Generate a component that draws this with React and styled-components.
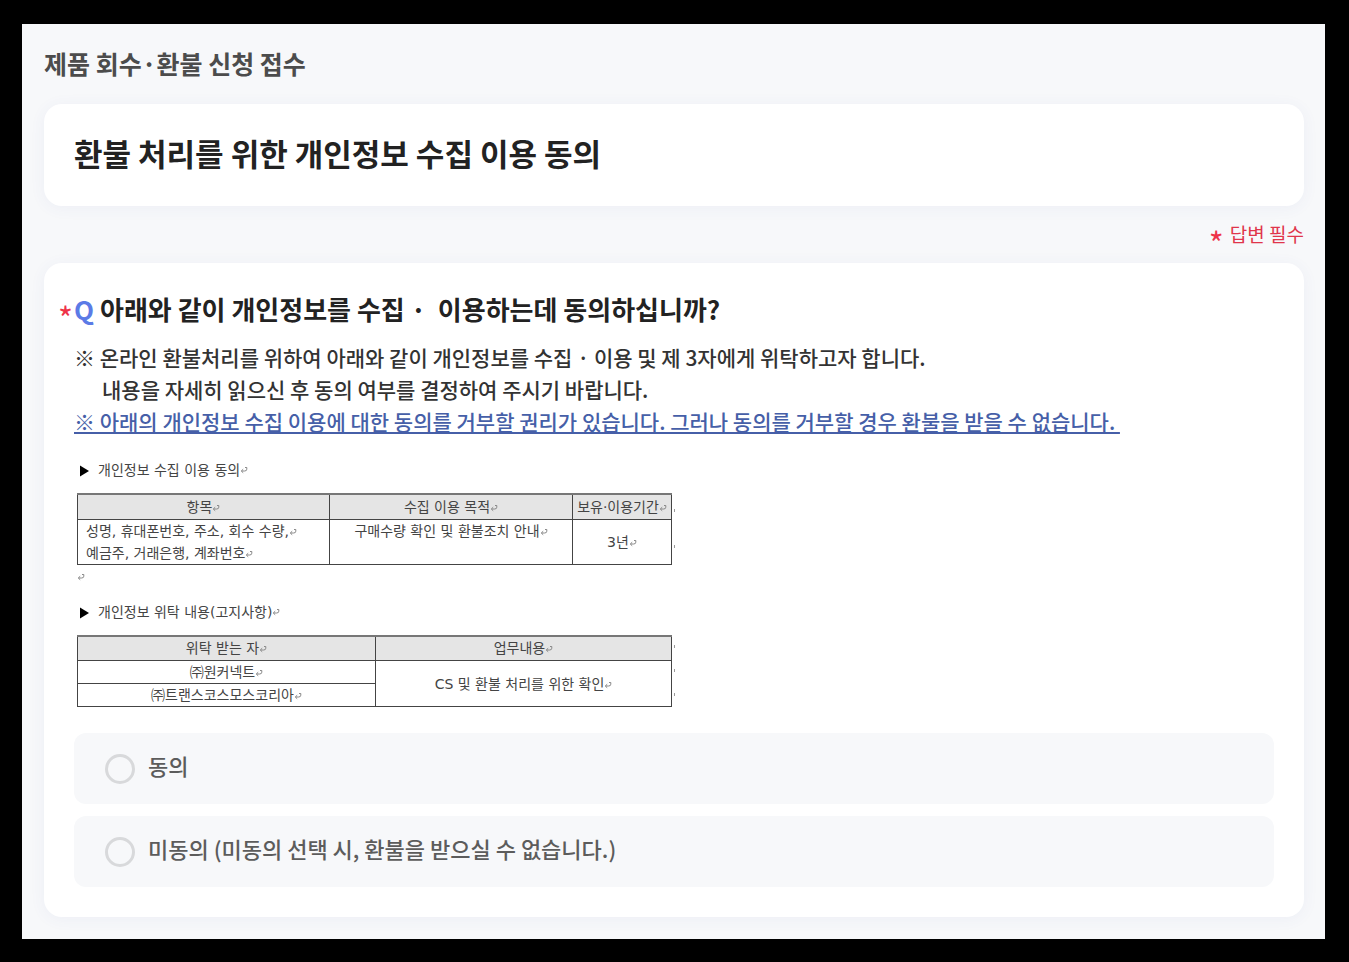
import React, { useState } from "react";
import styled, { createGlobalStyle } from "styled-components";

const options = [
  { value: "agree", label: "동의" },
  { value: "disagree", label: "미동의 (미동의 선택 시, 환불을 받으실 수 없습니다.)" },
];

function Mark() {
  return (
    <ReturnMark viewBox="0 0 8 8" aria-hidden="true">
      <path d="M5 1.5H6.8V3.2Q6.8 5 4.6 5H1.4M3.2 3.2L1.3 5L3.2 6.8" />
    </ReturnMark>
  );
}

function App() {
  const [answer, setAnswer] = useState("");
  return (
    <>
      <GlobalStyle />
      <Page>
        <FormName>제품 회수·환불 신청 접수</FormName>
        <TitleCard>
          <h1>환불 처리를 위한 개인정보 수집 이용 동의</h1>
        </TitleCard>
        <Required>
          <Star>*</Star>
          <span>답변 필수</span>
        </Required>
        <QuestionCard>
          <Question id="question">
            <Star>*</Star>
            <span className="q">Q</span>
            <span>아래와 같이 개인정보를 수집 ·&nbsp; 이용하는데 동의하십니까?</span>
          </Question>
          <Description>
            <p>※ 온라인 환불처리를 위하여 아래와 같이 개인정보를 수집 · 이용 및 제 3자에게 위탁하고자 합니다.</p>
            <p className="indent">내용을 자세히 읽으신 후 동의 여부를 결정하여 주시기 바랍니다.</p>
            <p className="notice">
              ※ 아래의 개인정보 수집 이용에 대한 동의를 거부할 권리가 있습니다. 그러나 동의를 거부할 경우 환불을 받을 수 없습니다.&nbsp;
            </p>
          </Description>

          <Document>
            <DocHeading>
              <Arrow viewBox="0 0 10 12" aria-hidden="true"><path d="M0 0.5L9 6L0 11.5Z" /></Arrow>
              개인정보 수집 이용 동의<Mark />
            </DocHeading>
            <TableRow>
              <Table>
                <colgroup>
                  <col width="252" />
                  <col width="243" />
                  <col width="99" />
                </colgroup>
                <thead>
                  <tr>
                    <th>항목<Mark /></th>
                    <th>수집 이용 목적<Mark /></th>
                    <th>보유·이용기간<Mark /></th>
                  </tr>
                </thead>
                <tbody>
                  <tr>
                    <Cell $left>
                      성명, 휴대폰번호, 주소, 회수 수량,<Mark /><br />
                      예금주, 거래은행, 계좌번호<Mark />
                    </Cell>
                    <Cell $top>구매수량 확인 및 환불조치 안내<Mark /></Cell>
                    <Cell>3년<Mark /></Cell>
                  </tr>
                </tbody>
              </Table>
              <Ticks><i /><i /></Ticks>
            </TableRow>
            <EmptyLine><Mark /></EmptyLine>

            <DocHeading>
              <Arrow viewBox="0 0 10 12" aria-hidden="true"><path d="M0 0.5L9 6L0 11.5Z" /></Arrow>
              개인정보 위탁 내용(고지사항)<Mark />
            </DocHeading>
            <TableRow>
              <Table>
                <colgroup>
                  <col width="298" />
                  <col width="296" />
                </colgroup>
                <thead>
                  <tr>
                    <th>위탁 받는 자<Mark /></th>
                    <th>업무내용<Mark /></th>
                  </tr>
                </thead>
                <tbody>
                  <tr>
                    <Cell>㈜원커넥트<Mark /></Cell>
                    <Cell rowSpan="2">CS 및 환불 처리를 위한 확인<Mark /></Cell>
                  </tr>
                  <tr>
                    <Cell>㈜트랜스코스모스코리아<Mark /></Cell>
                  </tr>
                </tbody>
              </Table>
              <Ticks><i /><i /><i /></Ticks>
            </TableRow>
          </Document>

          <Options role="radiogroup" aria-labelledby="question">
            {options.map((o) => (
              <Option key={o.value} htmlFor={o.value}>
                <input
                  type="radio"
                  id={o.value}
                  name="consent"
                  value={o.value}
                  checked={answer === o.value}
                  onChange={() => setAnswer(o.value)}
                />
                <span>{o.label}</span>
              </Option>
            ))}
          </Options>
        </QuestionCard>
      </Page>
    </>
  );
}

export default App;

const GlobalStyle = createGlobalStyle`
  * {
    box-sizing: border-box;
  }
  body {
    margin: 0;
    padding: 24px 24px 23px 22px;
    background: #000;
    font-family: "Noto Sans CJK KR", sans-serif;
  }
  h1, h2, h3, p {
    margin: 0;
  }
`;

const Page = styled.main`
  padding: 21px 21px 22px 22px;
  background: #f7f8fa;
`;

const FormName = styled.h2`
  font-size: 25px;
  line-height: 36px;
  font-weight: 700;
  color: #4c4c4c;
`;

const Card = styled.section`
  background: #fff;
  border-radius: 18px;
  box-shadow: 0 2px 16px rgba(70, 90, 170, 0.06);
`;

const TitleCard = styled(Card)`
  margin-top: 23px;
  padding: 27px 30px 31px;

  h1 {
    font-size: 31px;
    line-height: 44px;
    font-weight: 700;
    color: #222;
  }
`;

const Required = styled.div`
  display: flex;
  justify-content: flex-end;
  gap: 6px;
  padding: 14px 0 15px;
  font-size: 19px;
  line-height: 28px;
  color: #e0354b;
`;

const Star = styled.span`
  height: 28px;
  padding-top: 8px;
  font-size: 32px;
  line-height: 28px;
  font-weight: 400;
  color: #ee3348;
`;

const QuestionCard = styled(Card)`
  padding: 27px 30px 30px;
`;

const Question = styled.h3`
  display: flex;
  align-items: center;
  font-size: 26px;
  line-height: 38px;
  font-weight: 700;
  color: #222;

  ${Star} {
    width: 16px;
    margin-left: -16px;
  }
  .q {
    width: 26px;
    color: #5b7be6;
  }
`;

const Description = styled.div`
  margin-top: 13px;
  font-size: 21px;
  line-height: 32px;
  font-weight: 500;
  color: #333;

  .indent {
    padding-left: 28px;
  }
  .notice {
    color: #465fa8;
    text-decoration: underline;
    text-decoration-thickness: 2px;
    text-decoration-skip-ink: none;
    text-underline-offset: 2px;
  }
`;

const Document = styled.div`
  margin: 21px 0 26px 3px;
  font-family: "DejaVu Sans", "Noto Sans CJK KR", sans-serif;
  font-size: 14px;
  line-height: 22px;
  color: #444;
`;

const DocHeading = styled.p`
  display: flex;
  align-items: center;
  height: 24px;
  margin-bottom: 11px;
`;

const Arrow = styled.svg`
  width: 10px;
  height: 12px;
  margin: 2px 8px 0 3px;
  fill: #000;
`;

const ReturnMark = styled.svg`
  width: 8px;
  height: 8px;
  fill: none;
  stroke: #888;
  stroke-width: 1;
`;

const TableRow = styled.div`
  display: flex;
  gap: 2px;
`;

const Table = styled.table`
  width: 594px;
  table-layout: fixed;
  border-collapse: collapse;
  border: 1px solid #444;
  border-top: 2px solid #777;

  th, td {
    height: 23px;
    padding: 0;
    border: 1px solid #444;
    text-align: center;
    white-space: nowrap;
  }
  th {
    height: 25px;
    border-top: 2px solid #777;
    background: #e5e5e5;
    font-weight: 400;
  }
`;

const Cell = styled.td`
  && {
    padding-left: ${(p) => (p.$left ? "8px" : "0")};
    text-align: ${(p) => (p.$left ? "left" : "center")};
    vertical-align: ${(p) => (p.$top ? "top" : "middle")};
  }
`;

const Ticks = styled.div`
  display: flex;
  flex-direction: column;
  justify-content: space-around;

  i {
    width: 1px;
    height: 3px;
    background: #999;
  }
`;

const EmptyLine = styled.p`
  display: flex;
  align-items: center;
  height: 24px;
  margin-bottom: 11px;
`;

const Options = styled.div`
  display: flex;
  flex-direction: column;
  gap: 12px;
`;

const Option = styled.label`
  display: flex;
  align-items: center;
  gap: 13px;
  min-height: 71px;
  padding: 0 31px;
  border-radius: 12px;
  background: #f7f8fa;
  font-size: 22px;
  line-height: 32px;
  font-weight: 500;
  color: #5c5c5c;
  cursor: pointer;

  span {
    padding-bottom: 8px;
  }
  input {
    appearance: none;
    flex: none;
    width: 30px;
    height: 30px;
    margin: 0;
    border: 3px solid #d8d9db;
    border-radius: 50%;
  }
  input:checked {
    border: 9px solid #5b7be6;
  }
`;
